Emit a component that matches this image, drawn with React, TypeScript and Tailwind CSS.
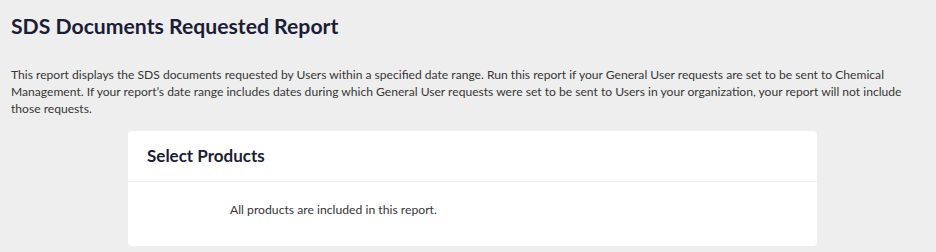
export default function App() {
  return (
    <div className="min-h-[252px] w-[936px] bg-[#eeeeee] pl-[11px] pr-4 pt-[12px] font-['Lato',sans-serif]">
      <h1 className="text-[21.2px] font-bold leading-[28px] text-[#1b1d36]">SDS Documents Requested Report</h1>
      <p className="mt-[26px] w-[905px] text-[12.1px] leading-[17px] text-[#363636]">
        This report displays the SDS documents requested by Users within a specified date range. Run this report if your General User requests are set to be sent to Chemical Management. If your report’s date range includes dates during which General User requests were set to be sent to Users in your organization, your report will not include those requests.
      </p>
      <div className="ml-[117px] mt-[14px] w-[689px] rounded-[4px] bg-white">
        <div className="flex h-[51px] items-center border-b border-[#e8f1f8] px-[19px]">
          <h2 className="text-[17px] font-bold text-[#1b1d36]">Select Products</h2>
        </div>
        <div className="flex h-[64px] items-center pl-[102px] pb-[8px]">
          <p className="text-[12.2px] text-[#363636]">All products are included in this report.</p>
        </div>
      </div>
    </div>
  );
}
